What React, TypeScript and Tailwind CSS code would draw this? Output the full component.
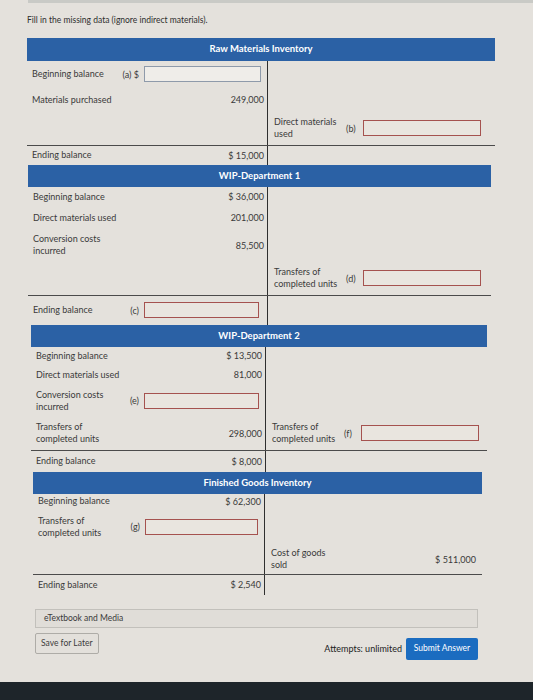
import type { ReactNode } from 'react';

function Box({ tone = 'red', className = '' }: { tone?: 'red' | 'blue'; className?: string }) {
  const border = tone === 'blue' ? 'border-[#8e9aaa] bg-[#efede9]' : 'border-[#a5524f] bg-[#e9e5df]';
  return <div className={`h-[16px] shrink-0 border-[1.5px] ${border} ${className}`} />;
}

interface RowProps {
  cols: string;
  h: string;
  hr?: boolean;
  left?: ReactNode;
  right?: ReactNode;
}

function Row({ cols, h, hr, left, right }: RowProps) {
  return (
    <div className={`grid ${cols} ${h} ${hr ? 'border-t border-[#4b4b4b]' : ''}`}>
      <div className="flex items-center border-r border-[#2f2f2f]">{left}</div>
      <div className="flex items-center">{right}</div>
    </div>
  );
}

function Label({ children }: { children: ReactNode }) {
  return <span className="flex-1 pl-[5px] leading-[12px]">{children}</span>;
}

function Value({ children }: { children: ReactNode }) {
  return <span className="pr-[3px]">{children}</span>;
}

function Letter({ children }: { children: ReactNode }) {
  return <span className="mr-[5px]">{children}</span>;
}

function Credit({ label, letter }: { label: ReactNode; letter: string }) {
  return (
    <>
      <span className="w-[78px] shrink-0 pl-[6px] leading-[12px]">{label}</span>
      <span className="w-[17px] shrink-0">{letter}</span>
      <Box className="w-[118px]" />
    </>
  );
}

function Header({ title, tall }: { title: string; tall?: boolean }) {
  return (
    <div className={`flex ${tall ? 'h-[23px]' : 'h-[22px]'} items-center justify-center bg-[#2b61a5] text-[9.5px] font-bold text-white`}>
      {title}
    </div>
  );
}

export default function App() {
  const c1 = 'grid-cols-[241px_1fr]';
  const c2 = 'grid-cols-[240px_1fr]';
  const c3 = 'grid-cols-[235px_1fr]';
  const c4 = 'grid-cols-[232px_1fr]';

  return (
    <div className="relative flex h-[700px] w-[533px] flex-col overflow-hidden bg-[#e4e1dc] font-[Lato,sans-serif] text-[9px] text-[#3a3a3a]">
      <div className="ml-[28px] h-[3px] bg-[#c9cac6]" />

      <div className="ml-[27px] mt-[11px] text-[8.5px] text-[#2e2e2e]">Fill in the missing data (ignore indirect materials).</div>

      {/* Raw materials */}
      <div className="ml-[27px] mt-[11px] w-[468px]">
        <Header title="Raw Materials Inventory" tall />
        <Row
          cols={c1}
          h="h-[27px]"
          left={
            <>
              <Label>Beginning balance</Label>
              <Letter>(a) $</Letter>
              <Box tone="blue" className="mr-[6px] w-[117px]" />
            </>
          }
        />
        <Row cols={c1} h="h-[24px]" left={<><Label>Materials purchased</Label><Value>249,000</Value></>} />
        <Row
          cols={c1}
          h="h-[33px]"
          right={<Credit label={<>Direct materials<br />used</>} letter="(b)" />}
        />
        <Row cols={c1} h="h-[20px]" hr left={<><Label>Ending balance</Label><Value>$ 15,000</Value></>} />
      </div>

      {/* WIP 1 */}
      <div className="ml-[28px] w-[463px]">
        <Header title="WIP-Department 1" />
        <Row cols={c2} h="h-[20px]" left={<><Label>Beginning balance</Label><Value>$ 36,000</Value></>} />
        <Row cols={c2} h="h-[22px]" left={<><Label>Direct materials used</Label><Value>201,000</Value></>} />
        <Row cols={c2} h="h-[33px]" left={<><Label>Conversion costs<br />incurred</Label><Value>85,500</Value></>} />
        <Row cols={c2} h="h-[33px]" right={<Credit label={<>Transfers of<br />completed units</>} letter="(d)" />} />
        <Row
          cols={c2}
          h="h-[30px]"
          hr
          left={
            <>
              <Label>Ending balance</Label>
              <Letter>(c)</Letter>
              <Box className="mr-[8px] w-[115px]" />
            </>
          }
        />
      </div>

      {/* WIP 2 */}
      <div className="ml-[31px] w-[456px]">
        <Header title="WIP-Department 2" />
        <Row cols={c3} h="h-[18px]" left={<><Label>Beginning balance</Label><Value>$ 13,500</Value></>} />
        <Row cols={c3} h="h-[20px]" left={<><Label>Direct materials used</Label><Value>81,000</Value></>} />
        <Row
          cols={c3}
          h="h-[32px]"
          left={
            <>
              <Label>Conversion costs<br />incurred</Label>
              <Letter>(e)</Letter>
              <Box className="mr-[6px] w-[115px]" />
            </>
          }
        />
        <Row
          cols={c3}
          h="h-[33px]"
          left={<><Label>Transfers of<br />completed units</Label><Value>298,000</Value></>}
          right={<Credit label={<>Transfers of<br />completed units</>} letter="(f)" />}
        />
        <Row cols={c3} h="h-[22px]" hr left={<><Label>Ending balance</Label><Value>$ 8,000</Value></>} />
      </div>

      {/* Finished goods */}
      <div className="ml-[33px] w-[449px]">
        <Header title="Finished Goods Inventory" />
        <Row cols={c4} h="h-[15px]" left={<><Label>Beginning balance</Label><Value>$ 62,300</Value></>} />
        <Row
          cols={c4}
          h="h-[36px]"
          left={
            <>
              <Label>Transfers of<br />completed units</Label>
              <Letter>(g)</Letter>
              <Box className="mr-[6px] w-[113px]" />
            </>
          }
        />
        <Row
          cols={c4}
          h="h-[29px]"
          right={
            <>
              <span className="flex-1 pl-[6px] leading-[12px]">Cost of goods<br />sold</span>
              <span className="pr-[6px]">$ 511,000</span>
            </>
          }
        />
        <Row cols={c4} h="h-[21px]" hr left={<><Label>Ending balance</Label><Value>$ 2,540</Value></>} />
      </div>

      <div className="ml-[35px] mt-[14px] flex h-[19px] w-[443px] items-center border border-[#c2c0bb] bg-[#e0ddd8] pl-[8px] text-[8.5px]">
        eTextbook and Media
      </div>

      <div className="ml-[35px] mt-[5px] flex w-[443px] items-start justify-between">
        <button className="h-[21px] rounded-[2px] border border-[#aeaca7] bg-[#e3e0db] px-[5px] text-[8.5px] text-[#3c3c3c]">
          Save for Later
        </button>
        <div className="mt-[5px] flex items-center gap-[4px]">
          <span className="text-[9px] text-[#222]">Attempts: unlimited</span>
          <button className="h-[22px] w-[72px] rounded-[2px] bg-[#1b6cc0] text-[8.5px] text-white">Submit Answer</button>
        </div>
      </div>

      <div className="absolute bottom-0 left-0 h-[18px] w-full bg-[#1e252a]" />
    </div>
  );
}
